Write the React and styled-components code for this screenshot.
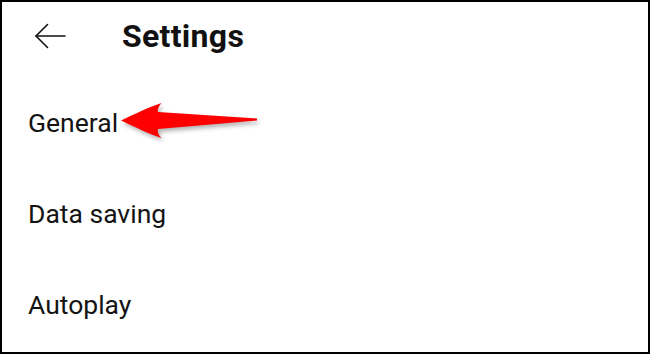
import React from 'react'
import styled, { createGlobalStyle } from 'styled-components'

const Global = createGlobalStyle`
  html, body {
    margin: 0;
    padding: 0;
    background: #fff;
  }
  body {
    font-family: Roboto, "Noto Sans", Arial, sans-serif;
  }
`

const Frame = styled.div`
  box-sizing: border-box;
  width: 650px;
  height: 354px;
  border: 2px solid #000;
  background: #fff;
  display: flex;
  flex-direction: column;
  overflow: hidden;
`

const Header = styled.div`
  height: 68px;
  display: flex;
  align-items: center;
  padding-left: 32px;
`

const BackButton = styled.button`
  border: none;
  background: transparent;
  padding: 0;
  width: 32px;
  height: 26px;
  display: flex;
  align-items: center;
  cursor: pointer;
`

const Title = styled.h1`
  margin: -1px 0 0 56px;
  font-size: 32px;
  font-weight: 700;
  color: #111;
  letter-spacing: 0.3px;
`

const List = styled.div`
  margin-top: 7px;
  display: flex;
  flex-direction: column;
`

const Row = styled.div`
  height: 91px;
  display: flex;
  align-items: center;
  padding-left: 26px;
`

const Label = styled.span`
  font-size: 26.5px;
  font-weight: 400;
  color: #141414;
`

const Pointer = styled.svg`
  width: 140px;
  height: 40px;
  margin-left: 2px;
  margin-top: -3px;
  filter: drop-shadow(2px 3px 2px rgba(0, 0, 0, 0.3));
`

const BackIcon = () => (
  <svg width="32" height="26" viewBox="0 0 32 26" fill="none" stroke="#111" strokeWidth="1.6" strokeLinecap="round" strokeLinejoin="round">
    <path d="M2 13 H31" />
    <path d="M13.5 1.5 L2 13 L13.5 24.5" />
  </svg>
)

const RedArrow = () => (
  <Pointer viewBox="0 0 140 40">
    <path
      fill="#ff0000"
      d="M1 19.5 C 15 13, 29 6, 41.5 2 C 38.5 5.5, 37 8.5, 38 11 L 137 17.6 L 137 19.4 L 38 28 C 37 31, 38.5 34, 41.5 37 C 29 33, 15 26, 1 19.5 Z"
    />
  </Pointer>
)

const items = ['General', 'Data saving', 'Autoplay']

const App = () => {
  return (
    <>
      <Global />
      <Frame>
        <Header>
          <BackButton aria-label="Back">
            <BackIcon />
          </BackButton>
          <Title>Settings</Title>
        </Header>
        <List>
          {items.map((item) => (
            <Row key={item}>
              <Label>{item}</Label>
              {item === 'General' && <RedArrow />}
            </Row>
          ))}
        </List>
      </Frame>
    </>
  )
}

export default App
